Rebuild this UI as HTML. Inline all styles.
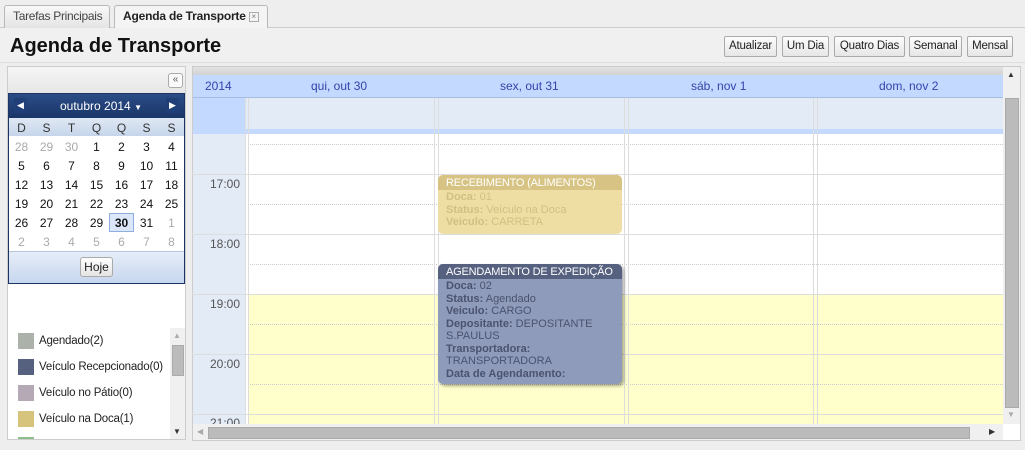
<!DOCTYPE html>
<html><head><meta charset="utf-8">
<style>
*{box-sizing:border-box;margin:0;padding:0}
body{width:1025px;height:450px;overflow:hidden;background:#fff;font-family:"Liberation Sans",Arial,sans-serif;font-size:12px;color:#222;position:relative}
.a{position:absolute;white-space:nowrap}
.tab{position:absolute;top:5px;height:23px;border:1px solid #b8b8b8;border-bottom:none;border-radius:3px 3px 0 0;font-size:12px;line-height:21px;padding:0 8px;white-space:nowrap;overflow:hidden}
.btn{position:absolute;top:36px;height:21px;border:1px solid #aaa;border-radius:2px;background:linear-gradient(#fdfdfd,#e6e6e6);font-size:11.5px;line-height:19px;text-align:center;color:#222;white-space:nowrap;letter-spacing:-.2px}
.cal td{width:25px;height:19px;text-align:center;font-size:12px;color:#111}
.cal td.g{color:#aaa}
.leg{position:absolute;left:10px;font-size:11.5px;color:#222;line-height:16px;white-space:nowrap;letter-spacing:-.2px}
.leg i{display:inline-block;width:16px;height:16px;vertical-align:top;margin-right:5px}
.hl{position:absolute;left:192px;width:811px;height:1px;background:#ddd}
.dl{position:absolute;left:248px;width:755px;border-top:1px dotted #ccc}
.vl{position:absolute;top:98px;width:1px;height:326px;background:#ddd}
.tm{position:absolute;left:192px;width:48px;text-align:right;color:#555;font-size:12px}
.dh{position:absolute;top:79px;color:#3344aa;font-size:12px}
.ev{position:absolute;left:438px;width:184px;border-radius:5px;overflow:hidden;font-size:11px;line-height:12.5px;white-space:nowrap}
.ev .h{color:#fff;padding:2px 8px;font-size:11px;height:15px;letter-spacing:-.2px}
.ev .b{padding:1px 8px}
</style></head><body>
<!-- tab bar -->
<div class="a" style="left:0;top:0;width:1025px;height:28px;background:#eee;border-bottom:1px solid #ccc"></div>
<div class="tab" style="left:4px;width:106px;background:linear-gradient(#f8f8f8,#e4e4e4);color:#444;letter-spacing:-.3px">Tarefas Principais</div>
<div class="tab" style="left:114px;width:154px;height:24px;background:#f4f4f4;font-weight:bold;color:#222;letter-spacing:-.2px">Agenda de Transporte <span style="display:inline-block;width:10px;height:10px;border:1px solid #aaa;font-size:8px;line-height:8px;text-align:center;color:#777;vertical-align:1px;font-weight:normal;letter-spacing:0">×</span></div>
<!-- header -->
<div class="a" style="left:0;top:28px;width:1025px;height:35px;background:#f0f0f0;border-bottom:1px solid #ddd"></div>
<div class="a" style="left:10px;top:35px;font-size:20px;font-weight:bold;color:#111">Agenda de Transporte</div>
<div class="btn" style="left:724px;width:53px">Atualizar</div>
<div class="btn" style="left:782px;width:47px">Um Dia</div>
<div class="btn" style="left:834px;width:71px">Quatro Dias</div>
<div class="btn" style="left:909px;width:53px">Semanal</div>
<div class="btn" style="left:967px;width:46px">Mensal</div>
<!-- body background -->
<div class="a" style="left:0;top:63px;width:1025px;height:387px;background:#eee"></div>
<!-- left panel -->
<div class="a" style="left:7px;top:66px;width:179px;height:374px;background:#fff;border:1px solid #ccc;overflow:hidden">
 <div class="leg" style="top:266px"><i style="background:#acb2a9"></i>Agendado(2)</div>
 <div class="leg" style="top:292px"><i style="background:#56617f"></i>Veículo Recepcionado(0)</div>
 <div class="leg" style="top:318px"><i style="background:#b6a9b6"></i>Veículo no Pátio(0)</div>
 <div class="leg" style="top:344px"><i style="background:#d6c47c"></i>Veículo na Doca(1)</div>
 <div class="leg" style="top:370px"><i style="background:#8dbf8a"></i>Veículo Liberado(0)</div>
 <div class="a" style="left:162px;top:261px;width:16px;height:112px;background:#f0f0f0"></div>
 <div class="a" style="left:164px;top:278px;width:12px;height:31px;background:#bbb;border:1px solid #aaa"></div>
 <div class="a" style="left:165px;top:264px;font-size:8px;color:#aaa">▲</div>
 <div class="a" style="left:165px;top:360px;font-size:8px;color:#333">▼</div>
</div>
<div class="a" style="left:8px;top:67px;width:177px;height:26px;background:linear-gradient(#f6f6f6,#e6e6e6)"></div>
<div class="a" style="left:168px;top:73px;width:15px;height:15px;border:1px solid #aaa;border-radius:3px;background:#fafafa;font-size:10px;line-height:12px;text-align:center;color:#555">«</div>
<div class="a" style="left:8px;top:93px;width:177px;height:191px;border:1px solid #1c3564;background:#fff"></div>
<div class="a" style="left:9px;top:94px;width:175px;height:24px;background:linear-gradient(#2a4c86,#1b3668)"></div>
<div class="a" style="left:14px;top:98px;width:13px;height:15px;background:#203f78;color:#fff;font-size:9px;line-height:15px;text-align:center">◀</div>
<div class="a" style="left:166px;top:98px;width:13px;height:15px;background:#203f78;color:#fff;font-size:9px;line-height:15px;text-align:center">▶</div>
<div class="a" style="left:60px;top:99px;color:#fff;font-size:12px">outubro 2014 <span style="font-size:8px">▼</span></div>
<div class="a" style="left:9px;top:118px;width:175px;height:18px;background:linear-gradient(#dfe8f4,#c6d5ea)"></div>
<table class="cal a" style="left:9px;top:118px;border-collapse:collapse">
<tr><td style="color:#333">D</td><td style="color:#333">S</td><td style="color:#333">T</td><td style="color:#333">Q</td><td style="color:#333">Q</td><td style="color:#333">S</td><td style="color:#333">S</td></tr>
<tr><td class="g">28</td><td class="g">29</td><td class="g">30</td><td>1</td><td>2</td><td>3</td><td>4</td></tr>
<tr><td>5</td><td>6</td><td>7</td><td>8</td><td>9</td><td>10</td><td>11</td></tr>
<tr><td>12</td><td>13</td><td>14</td><td>15</td><td>16</td><td>17</td><td>18</td></tr>
<tr><td>19</td><td>20</td><td>21</td><td>22</td><td>23</td><td>24</td><td>25</td></tr>
<tr><td>26</td><td>27</td><td>28</td><td>29</td><td style="font-weight:bold;background:#dbe7f8;outline:1px solid #8fb0de;outline-offset:-1px">30</td><td>31</td><td class="g">1</td></tr>
<tr><td class="g">2</td><td class="g">3</td><td class="g">4</td><td class="g">5</td><td class="g">6</td><td class="g">7</td><td class="g">8</td></tr>
</table>
<div class="a" style="left:9px;top:251px;width:175px;height:1px;background:#b5c6de"></div>
<div class="a" style="left:9px;top:252px;width:175px;height:31px;background:linear-gradient(#e5edf8,#c7d7ee)"></div>
<div class="a" style="left:80px;top:257px;width:33px;height:20px;border:1px solid #aaa;border-radius:3px;background:linear-gradient(#fff,#e4e4e4);text-align:center;line-height:18px;font-size:12px">Hoje</div>
<!-- calendar area -->
<div class="a" style="left:192px;top:66px;width:829px;height:375px;border:1px solid #ccc;background:#fff"></div>
<div class="a" style="left:193px;top:67px;width:810px;height:8px;background:linear-gradient(#e2e2e2,#d2d2d2)"></div>
<div class="a" style="left:193px;top:75px;width:810px;height:23px;background:#c3d9ff;border-bottom:1px solid #a6bde6"></div>
<div class="dh" style="left:205px">2014</div>
<div class="dh" style="left:311px">qui, out 30</div>
<div class="dh" style="left:500px">sex, out 31</div>
<div class="dh" style="left:691px">sáb, nov 1</div>
<div class="dh" style="left:879px">dom, nov 2</div>
<div class="a" style="left:193px;top:98px;width:810px;height:32px;background:#e3ebf7"></div>
<div class="a" style="left:193px;top:98px;width:52px;height:32px;background:#c3d9ff"></div>
<div class="a" style="left:193px;top:129px;width:810px;height:5px;background:#c3d9ff"></div>
<!-- grid -->
<div class="a" style="left:193px;top:134px;width:52px;height:290px;background:#e3ebf7"></div>
<div class="a" style="left:248px;top:294px;width:755px;height:130px;background:#ffffcc"></div>
<div class="hl" style="top:174px"></div><div class="hl" style="top:234px"></div><div class="hl" style="top:294px"></div><div class="hl" style="top:354px"></div><div class="hl" style="top:414px"></div>
<div class="dl" style="top:144px"></div><div class="dl" style="top:204px"></div><div class="dl" style="top:264px"></div><div class="dl" style="top:324px"></div><div class="dl" style="top:384px"></div>
<div class="vl" style="left:245px"></div><div class="vl" style="left:248px"></div>
<div class="vl" style="left:434px"></div><div class="vl" style="left:438px"></div>
<div class="vl" style="left:624px"></div><div class="vl" style="left:628px"></div>
<div class="vl" style="left:813px"></div><div class="vl" style="left:817px"></div>
<div class="tm" style="top:177px">17:00</div>
<div class="tm" style="top:237px">18:00</div>
<div class="tm" style="top:297px">19:00</div>
<div class="tm" style="top:357px">20:00</div>
<div class="tm" style="top:416px;height:8px;overflow:hidden">21:00</div>
<!-- events -->
<div class="ev" style="top:175px;height:59px;background:#eddc9c;opacity:.92">
<div class="h" style="background:#d4c07a">RECEBIMENTO (ALIMENTOS)</div>
<div class="b" style="color:#cdbb78"><b>Doca:</b> 01<br><b>Status:</b> Veículo na Doca<br><b>Veiculo:</b> CARRETA</div></div>
<div class="ev" style="top:264px;height:120px;background:#8e9bba;box-shadow:2px 2px 3px rgba(0,0,0,.35)">
<div class="h" style="background:#56617f">AGENDAMENTO DE EXPEDIÇÃO</div>
<div class="b" style="color:#4a5370"><b>Doca:</b> 02<br><b>Status:</b> Agendado<br><b>Veiculo:</b> CARGO<br><b>Depositante:</b> DEPOSITANTE<br>S.PAULUS<br><b>Transportadora:</b><br>TRANSPORTADORA<br><b>Data de Agendamento:</b></div></div>
<!-- scrollbars -->
<div class="a" style="left:1003px;top:67px;width:17px;height:357px;background:#f0f0f0"></div>
<div class="a" style="left:1005px;top:98px;width:14px;height:310px;background:#bbb;border:1px solid #aaa"></div>
<div class="a" style="left:1007px;top:70px;font-size:8px;color:#333">▲</div>
<div class="a" style="left:1007px;top:410px;font-size:8px;color:#aaa">▼</div>
<div class="a" style="left:193px;top:424px;width:810px;height:16px;background:#f0f0f0"></div>
<div class="a" style="left:208px;top:427px;width:762px;height:12px;background:#bbb;border:1px solid #aaa"></div>
<div class="a" style="left:197px;top:427px;font-size:8px;color:#aaa">◀</div>
<div class="a" style="left:989px;top:427px;font-size:8px;color:#333">▶</div>
</body></html>
